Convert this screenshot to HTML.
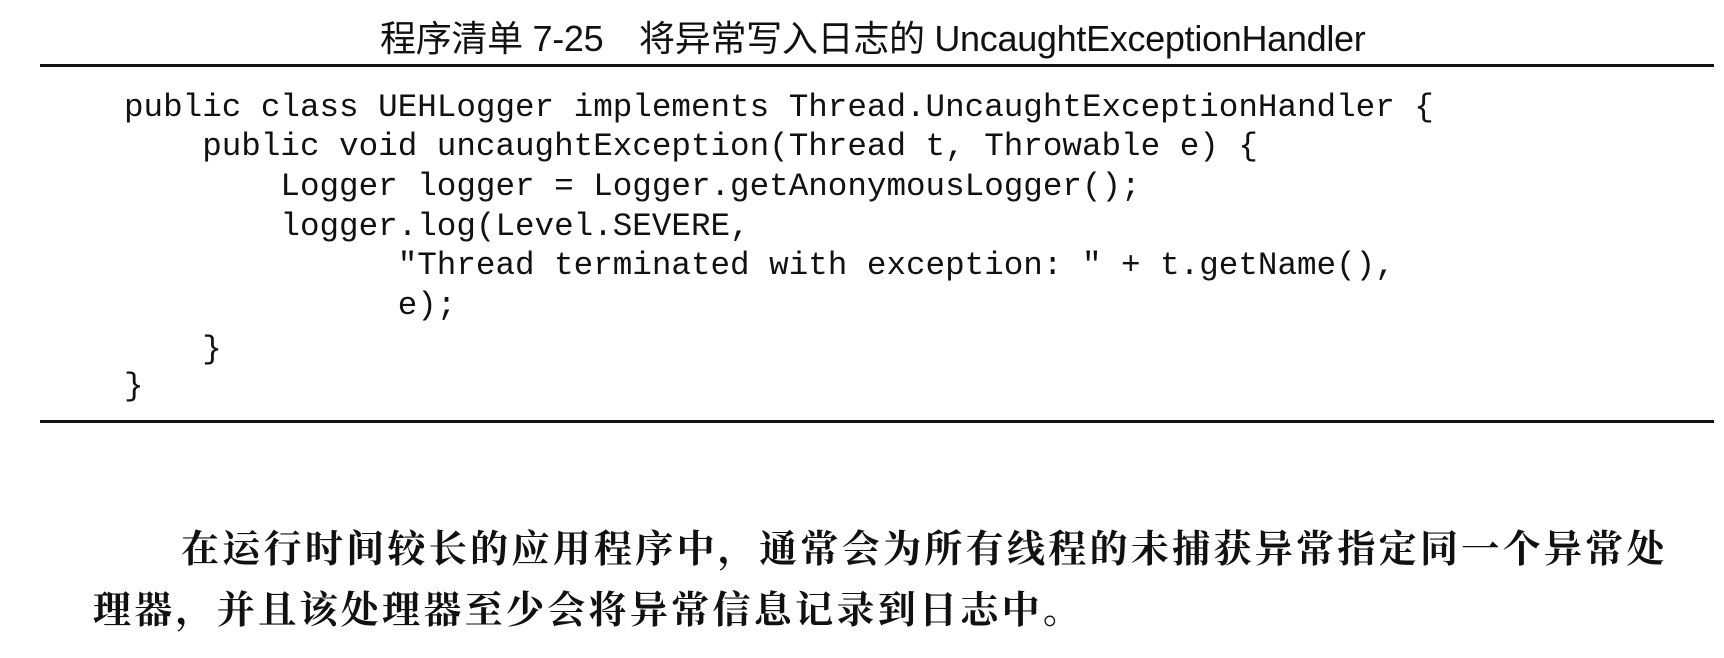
<!DOCTYPE html>
<html><head><meta charset="utf-8"><style>
html,body{margin:0;padding:0;background:#fff;}
body{width:1724px;height:658px;position:relative;overflow:hidden;color:#111;}
.t{position:absolute;left:380px;top:10px;font-family:"Liberation Sans","Noto Sans CJK SC",sans-serif;font-size:36px;white-space:nowrap;letter-spacing:-0.3px;}
.r{position:absolute;left:40px;width:1674px;height:3px;background:#111;}
.c{position:absolute;font-family:"Liberation Mono",monospace;font-size:32.6px;white-space:pre;line-height:1;}
.p{position:absolute;font-family:"Liberation Serif","Noto Serif CJK SC",serif;font-weight:bold;font-size:38px;letter-spacing:3.3px;white-space:nowrap;}
</style></head><body>
<div class="t">程序清单 7-25　将异常写入日志的 UncaughtExceptionHandler</div>
<div class="r" style="top:64px"></div>
<div class="c" style="left:124px;top:92px">public class UEHLogger implements Thread.UncaughtExceptionHandler {</div>
<div class="c" style="left:124px;top:131px">    public void uncaughtException(Thread t, Throwable e) {</div>
<div class="c" style="left:124px;top:171px">        Logger logger = Logger.getAnonymousLogger();</div>
<div class="c" style="left:124px;top:211px">        logger.log(Level.SEVERE,</div>
<div class="c" style="left:124px;top:250px">              "Thread terminated with exception: " + t.getName(),</div>
<div class="c" style="left:124px;top:290px">              e);</div>
<div class="c" style="left:124px;top:334px">    }</div>
<div class="c" style="left:124px;top:371px">}</div>
<div class="r" style="top:420px"></div>
<div class="p" style="left:181px;top:518px">在运行时间较长的应用程序中，通常会为所有线程的未捕获异常指定同一个异常处</div>
<div class="p" style="left:93px;top:579px">理器，并且该处理器至少会将异常信息记录到日志中。</div>
</body></html>
